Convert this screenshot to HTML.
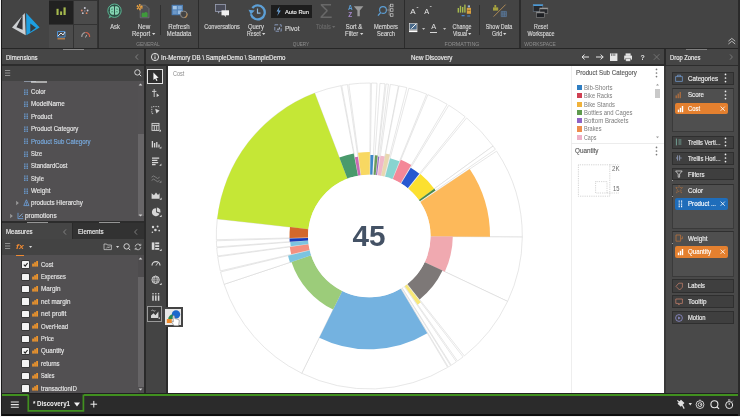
<!DOCTYPE html>
<html><head><meta charset="utf-8"><title>Discovery</title>
<style>
html,body{margin:0;padding:0;}
body{width:740px;height:417px;overflow:hidden;background:#444;position:relative;font-family:"Liberation Sans",sans-serif;}
#app{position:absolute;left:0;top:0;width:740px;height:417px;overflow:hidden;background:#444;}
.r{position:absolute;box-sizing:border-box;}
.t{position:absolute;white-space:nowrap;display:block;}
#txt{position:absolute;left:0;top:0;width:740px;height:417px;will-change:transform;}
svg{position:absolute;overflow:visible;}
</style></head><body><div id="app">
<div class="r" style="left:0px;top:0px;width:740px;height:48px;background:#444444;"></div>
<div class="r" style="left:0px;top:48px;width:740px;height:1px;background:#262626;"></div>
<div class="r" style="left:0px;top:49px;width:740px;height:15px;background:#464646;"></div>
<div class="r" style="left:0px;top:64px;width:740px;height:2px;background:#2d2d2d;"></div>
<div class="r" style="left:0px;top:66px;width:144px;height:15px;background:#434343;"></div>
<div class="r" style="left:0px;top:80.5px;width:144px;height:0.8px;background:#383838;"></div>
<div class="r" style="left:0px;top:81px;width:144px;height:140px;background:#525052;"></div>
<div class="r" style="left:137.5px;top:81px;width:6.5px;height:140px;background:#535153;"></div>
<div class="r" style="left:137.5px;top:134px;width:6.5px;height:82px;background:#686668;"></div>
<div class="r" style="left:0px;top:221px;width:144px;height:2px;background:#2c2c2c;"></div>
<div class="r" style="left:0px;top:223px;width:72.5px;height:16px;background:#454545;"></div>
<div class="r" style="left:72.5px;top:223px;width:71.5px;height:16px;background:#323232;"></div>
<div class="r" style="left:72px;top:223px;width:1px;height:16px;background:#2a2a2a;"></div>
<div class="r" style="left:0px;top:239px;width:144px;height:15.5px;background:#434343;"></div>
<div class="r" style="left:0px;top:254.5px;width:144px;height:139px;background:#525052;"></div>
<div class="r" style="left:137.5px;top:254.5px;width:6.5px;height:139px;background:#4e4c4e;"></div>
<div class="r" style="left:137.5px;top:277.4px;width:6.5px;height:109.6px;background:#666466;"></div>
<div class="r" style="left:144px;top:49px;width:2px;height:345px;background:#2a2a2a;"></div>
<div class="r" style="left:146px;top:66px;width:20px;height:328px;background:#444444;"></div>
<div class="r" style="left:166px;top:66px;width:2px;height:328px;background:#2c2c2c;"></div>
<div class="r" style="left:168px;top:66px;width:496px;height:327px;background:#ffffff;"></div>
<div class="r" style="left:664px;top:49px;width:1.5px;height:17px;background:#2a2a2a;"></div>
<div class="r" style="left:664px;top:66px;width:2px;height:328px;background:#393939;"></div>
<div class="r" style="left:665.5px;top:49px;width:74.5px;height:16px;background:#454545;"></div>
<div class="r" style="left:666px;top:66px;width:74px;height:328px;background:#494949;"></div>
<div class="r" style="left:0px;top:393px;width:740px;height:1px;background:#222;"></div>
<div class="r" style="left:0px;top:396px;width:740px;height:18px;background:#2b2b2b;"></div>
<div class="r" style="left:0px;top:394px;width:740px;height:2px;background:#41901f;"></div>
<div class="r" style="left:0px;top:413.8px;width:740px;height:1.8px;background:#0c0c0c;"></div>
<div class="r" style="left:0px;top:415.5px;width:740px;height:1.5px;background:#f2f2f2;"></div>
<div class="r" style="left:0px;top:0px;width:1px;height:417px;background:#f2f2f2;"></div>
<div class="r" style="left:1px;top:0px;width:1.2px;height:415.5px;background:#1a1a1a;"></div>
<div class="r" style="left:738.3px;top:0px;width:1.7px;height:415.5px;background:#2a2a2a;"></div>
<svg width="740" height="417" viewBox="0 0 740 417" style="left:0;top:0"><path d="M308.38,229.17L217.25,218.95A153,153 0 0 1 314.72,93.07L347.43,178.73A61.3,61.3 0 0 0 308.38,229.17Z" fill="#fff" stroke="#d6d6d6" stroke-width="0.6"/><path d="M347.43,178.73L314.72,93.07A153,153 0 0 1 340.89,85.66L357.92,175.77A61.3,61.3 0 0 0 347.43,178.73Z" fill="#fff" stroke="#d6d6d6" stroke-width="0.6"/><path d="M358.23,175.71L341.68,85.51A153,153 0 0 1 347.48,84.56L360.56,175.33A61.3,61.3 0 0 0 358.23,175.71Z" fill="#fff" stroke="#d6d6d6" stroke-width="0.6"/><path d="M361.09,175.25L348.80,84.38A153,153 0 0 1 370.37,83.00L369.73,174.70A61.3,61.3 0 0 0 361.09,175.25Z" fill="#fff" stroke="#d6d6d6" stroke-width="0.6"/><path d="M370.16,174.71L371.44,83.01A153,153 0 0 1 377.04,83.20L372.40,174.78A61.3,61.3 0 0 0 370.16,174.71Z" fill="#fff" stroke="#d6d6d6" stroke-width="0.6"/><path d="M373.58,174.85L379.97,83.37A153,153 0 0 1 385.03,83.81L375.60,175.02A61.3,61.3 0 0 0 373.58,174.85Z" fill="#fff" stroke="#d6d6d6" stroke-width="0.6"/><path d="M376.03,175.07L386.09,83.92A153,153 0 0 1 388.48,84.21L376.98,175.18A61.3,61.3 0 0 0 376.03,175.07Z" fill="#fff" stroke="#d6d6d6" stroke-width="0.6"/><path d="M377.73,175.28L390.33,84.45A153,153 0 0 1 398.49,85.81L381.00,175.83A61.3,61.3 0 0 0 377.73,175.28Z" fill="#fff" stroke="#d6d6d6" stroke-width="0.6"/><path d="M381.21,175.87L399.02,85.91A153,153 0 0 1 406.83,87.67L384.34,176.57A61.3,61.3 0 0 0 381.21,175.87Z" fill="#fff" stroke="#d6d6d6" stroke-width="0.6"/><path d="M385.17,176.79L408.90,88.21A153,153 0 0 1 426.61,94.14L392.26,179.16A61.3,61.3 0 0 0 385.17,176.79Z" fill="#fff" stroke="#d6d6d6" stroke-width="0.6"/><path d="M392.76,179.37L427.85,94.65A153,153 0 0 1 447.18,104.31L400.50,183.24A61.3,61.3 0 0 0 392.76,179.37Z" fill="#fff" stroke="#d6d6d6" stroke-width="0.6"/><path d="M401.15,183.62L448.79,105.27A153,153 0 0 1 465.17,116.76L407.71,188.23A61.3,61.3 0 0 0 401.15,183.62Z" fill="#fff" stroke="#d6d6d6" stroke-width="0.6"/><path d="M408.29,188.70L466.62,117.94A153,153 0 0 1 493.08,146.07L418.89,199.97A61.3,61.3 0 0 0 408.29,188.70Z" fill="#fff" stroke="#d6d6d6" stroke-width="0.6"/><path d="M418.89,199.97L493.08,146.07A153,153 0 0 1 495.39,149.34L419.82,201.28A61.3,61.3 0 0 0 418.89,199.97Z" fill="#fff" stroke="#d6d6d6" stroke-width="0.6"/><path d="M420.30,201.99L496.59,151.11A153,153 0 0 1 522.30,237.07L430.60,236.43A61.3,61.3 0 0 0 420.30,201.99Z" fill="#fff" stroke="#d6d6d6" stroke-width="0.6"/><path d="M430.60,236.43L522.30,237.07A153,153 0 0 1 507.62,301.39L424.72,262.20A61.3,61.3 0 0 0 430.60,236.43Z" fill="#fff" stroke="#d6d6d6" stroke-width="0.6"/><path d="M424.72,262.20L507.62,301.39A153,153 0 0 1 464.34,355.91L407.38,284.04A61.3,61.3 0 0 0 424.72,262.20Z" fill="#fff" stroke="#d6d6d6" stroke-width="0.6"/><path d="M406.87,284.44L463.07,356.89A153,153 0 0 1 457.49,361.02L404.64,286.09A61.3,61.3 0 0 0 406.87,284.44Z" fill="#fff" stroke="#d6d6d6" stroke-width="0.6"/><path d="M404.20,286.40L456.40,361.79A153,153 0 0 1 451.28,365.18L402.15,287.76A61.3,61.3 0 0 0 404.20,286.40Z" fill="#fff" stroke="#d6d6d6" stroke-width="0.6"/><path d="M401.87,287.93L450.60,365.61A153,153 0 0 1 448.33,367.01L400.96,288.49A61.3,61.3 0 0 0 401.87,287.93Z" fill="#fff" stroke="#d6d6d6" stroke-width="0.6"/><path d="M400.69,288.65L447.64,367.42A153,153 0 0 1 301.75,373.28L342.24,291.00A61.3,61.3 0 0 0 400.69,288.65Z" fill="#fff" stroke="#d6d6d6" stroke-width="0.6"/><path d="M342.24,291.00L301.75,373.28A153,153 0 0 1 224.12,284.29L311.13,255.35A61.3,61.3 0 0 0 342.24,291.00Z" fill="#fff" stroke="#d6d6d6" stroke-width="0.6"/><path d="M311.13,255.35L224.12,284.29A153,153 0 0 1 220.59,271.98L309.72,250.41A61.3,61.3 0 0 0 311.13,255.35Z" fill="#fff" stroke="#d6d6d6" stroke-width="0.6"/><path d="M309.62,250.00L220.34,270.94A153,153 0 0 1 217.72,256.76L308.57,244.32A61.3,61.3 0 0 0 309.62,250.00Z" fill="#fff" stroke="#d6d6d6" stroke-width="0.6"/><path d="M308.52,244.00L217.61,255.97A153,153 0 0 1 216.75,247.74L308.18,240.70A61.3,61.3 0 0 0 308.52,244.00Z" fill="#fff" stroke="#d6d6d6" stroke-width="0.6"/><path d="M308.16,240.38L216.69,246.94A153,153 0 0 1 216.38,240.81L308.03,237.93A61.3,61.3 0 0 0 308.16,240.38Z" fill="#fff" stroke="#d6d6d6" stroke-width="0.6"/><path d="M308.02,237.50L216.35,239.74A153,153 0 0 1 217.25,218.95L308.38,229.17A61.3,61.3 0 0 0 308.02,237.50Z" fill="#fff" stroke="#d6d6d6" stroke-width="0.6"/><path d="M308.38,229.17L217.25,218.95A153,153 0 0 1 314.72,93.07L347.43,178.73A61.3,61.3 0 0 0 308.38,229.17Z" fill="#c5e736"/><path d="M347.43,178.73L339.33,157.53A84,84 0 0 1 353.70,153.46L357.92,175.77A61.3,61.3 0 0 0 347.43,178.73Z" fill="#4a9a6c"/><path d="M358.23,175.71L354.86,157.31A80,80 0 0 1 357.89,156.82L360.56,175.33A61.3,61.3 0 0 0 358.23,175.71Z" fill="#c86ab4"/><path d="M361.09,175.25L358.05,152.76A84,84 0 0 1 369.89,152.00L369.73,174.70A61.3,61.3 0 0 0 361.09,175.25Z" fill="#f8d862"/><path d="M370.16,174.71L370.43,155.01A81,81 0 0 1 373.40,155.10L372.40,174.78A61.3,61.3 0 0 0 370.16,174.71Z" fill="#3c88c8"/><path d="M373.58,174.85L374.95,155.20A81,81 0 0 1 377.63,155.43L375.60,175.02A61.3,61.3 0 0 0 373.58,174.85Z" fill="#6a9a5a"/><path d="M376.03,175.07L378.08,156.48A80,80 0 0 1 379.33,156.63L376.98,175.18A61.3,61.3 0 0 0 376.03,175.07Z" fill="#9a6ac0"/><path d="M377.73,175.28L380.43,155.77A81,81 0 0 1 384.76,156.49L381.00,175.83A61.3,61.3 0 0 0 377.73,175.28Z" fill="#f0b8c8"/><path d="M381.21,175.87L385.62,153.60A84,84 0 0 1 389.91,154.57L384.34,176.57A61.3,61.3 0 0 0 381.21,175.87Z" fill="#e8d8b0"/><path d="M385.17,176.79L390.13,158.24A80.5,80.5 0 0 1 399.46,161.36L392.26,179.16A61.3,61.3 0 0 0 385.17,176.79Z" fill="#88d4d0"/><path d="M392.76,179.37L400.87,159.78A82.5,82.5 0 0 1 411.30,164.99L400.50,183.24A61.3,61.3 0 0 0 392.76,179.37Z" fill="#f48898"/><path d="M401.15,183.62L410.76,167.81A79.8,79.8 0 0 1 419.30,173.81L407.71,188.23A61.3,61.3 0 0 0 401.15,183.62Z" fill="#2858d0"/><path d="M408.29,188.70L420.38,174.04A80.3,80.3 0 0 1 434.26,188.80L418.89,199.97A61.3,61.3 0 0 0 408.29,188.70Z" fill="#fce030"/><path d="M418.89,199.97L434.26,188.80A80.3,80.3 0 0 1 435.48,190.52L419.82,201.28A61.3,61.3 0 0 0 418.89,199.97Z" fill="#4a8a4a"/><path d="M420.30,201.99L469.72,169.03A120.7,120.7 0 0 1 490.00,236.84L430.60,236.43A61.3,61.3 0 0 0 420.30,201.99Z" fill="#fdb95a"/><path d="M430.60,236.43L452.80,236.58A83.5,83.5 0 0 1 444.79,271.68L424.72,262.20A61.3,61.3 0 0 0 430.60,236.43Z" fill="#f0a9b0"/><path d="M424.72,262.20L442.53,270.62A81,81 0 0 1 419.61,299.48L407.38,284.04A61.3,61.3 0 0 0 424.72,262.20Z" fill="#7d7877"/><path d="M406.87,284.44L420.78,302.37A84,84 0 0 1 417.72,304.64L404.64,286.09A61.3,61.3 0 0 0 406.87,284.44Z" fill="#f8e878"/><path d="M400.69,288.65L427.31,333.32A113.3,113.3 0 0 1 319.28,337.66L342.24,291.00A61.3,61.3 0 0 0 400.69,288.65Z" fill="#74b2e0"/><path d="M342.24,291.00L333.10,309.58A82,82 0 0 1 291.49,261.88L311.13,255.35A61.3,61.3 0 0 0 342.24,291.00Z" fill="#9ccc7a"/><path d="M311.13,255.35L289.97,262.39A83.6,83.6 0 0 1 288.04,255.66L309.72,250.41A61.3,61.3 0 0 0 311.13,255.35Z" fill="#7cc4e0"/><path d="M309.62,250.00L291.22,254.31A80.2,80.2 0 0 1 289.84,246.88L308.57,244.32A61.3,61.3 0 0 0 309.62,250.00Z" fill="#f49080"/><path d="M308.52,244.00L290.68,246.35A79.3,79.3 0 0 1 290.23,242.08L308.18,240.70A61.3,61.3 0 0 0 308.52,244.00Z" fill="#7cc4e0"/><path d="M308.16,240.38L289.70,241.71A79.8,79.8 0 0 1 289.54,238.51L308.03,237.93A61.3,61.3 0 0 0 308.16,240.38Z" fill="#1a3ab8"/><path d="M308.02,237.50L289.52,237.95A79.8,79.8 0 0 1 290.00,227.10L308.38,229.17A61.3,61.3 0 0 0 308.02,237.50Z" fill="#d4682c"/><circle cx="369.3" cy="236.0" r="61.3" fill="#fff"/></svg>
<div class="r" style="left:48.5px;top:0px;width:49.5px;height:48px;background:#333333;"></div>
<div class="r" style="left:48.7px;top:1px;width:24.8px;height:23.3px;background:#212121;"></div>
<div class="r" style="left:74.3px;top:1px;width:22.9px;height:23.3px;background:#4b4b4b;"></div>
<div class="r" style="left:48.7px;top:25px;width:24.8px;height:22.6px;background:#4b4b4b;"></div>
<div class="r" style="left:74.3px;top:25px;width:22.9px;height:22.6px;background:#4b4b4b;"></div>
<div class="r" style="left:97.6px;top:0px;width:1.2px;height:48px;background:#2e2e2e;"></div>
<svg style="left:0px;top:0px" width="48" height="48" viewBox="0 0 48 48">
<path d="M16.4,27.2 L22.6,14.9 L22.6,29.8 Z" fill="#343438"/><path d="M30.3,23.4 L36,27.8 L30.3,32 Z" fill="#343a40"/>
<path d="M12,27.6 L24.8,12.9 L25.7,35.2 Z M16.4,27.2 L22.6,14.9 L22.6,29.8 Z" fill="#cdd0d3" fill-rule="evenodd"/>
<path d="M26.2,12.9 L39.6,27.6 L26.4,35.2 Z M30.3,23.4 L36,27.8 L30.3,32 Z" fill="#1d9fe2" fill-rule="evenodd"/>
</svg>
<svg style="left:48px;top:0px" width="50" height="48" viewBox="0 0 50 48">
<rect x="8.5" y="8.8" width="2.1" height="6.2" fill="#a6ba4e"/>
<rect x="12.1" y="11.4" width="2" height="3.6" fill="#a6ba4e"/>
<rect x="15.5" y="7.4" width="2.2" height="7.6" fill="#a6ba4e"/>
<circle cx="36.8" cy="8" r="1" fill="#c9c9d6"/><circle cx="33.8" cy="10.5" r="0.9" fill="#d9826a"/><circle cx="39.6" cy="10.5" r="0.9" fill="#c9c9d6"/>
<circle cx="34.8" cy="13.2" r="0.9" fill="#c9c9d6"/><circle cx="38.6" cy="13.2" r="0.9" fill="#e0805a"/><circle cx="36.8" cy="11" r="0.7" fill="#8a8aa0"/>
<path d="M9.5,31.5h7.5v5.5h-7.5z" fill="none" stroke="#4f8fd0" stroke-width="1"/><path d="M10,36 l3,-3 l2,2 l2,-3" stroke="#dfe6f0" stroke-width="1" fill="none"/>
<rect x="9.5" y="38.2" width="7.5" height="1.2" fill="#d08a4a"/>
<path d="M33.8,37 a4,4 0 0 1 3.5,-4.5" fill="none" stroke="#a0a0a0" stroke-width="1.2"/><path d="M37.3,32.5 a4,4 0 0 1 4.3,4.5" fill="none" stroke="#d0604a" stroke-width="1.2"/>
<path d="M37.5,37.5 l1.2,-2.6" stroke="#bdbdbd" stroke-width="0.9"/>
</svg>
<div class="r" style="left:62.5px;top:49px;width:21px;height:1px;background:#9a9a9a;opacity:.8;"></div>
<div class="r" style="left:685.5px;top:49px;width:21px;height:1px;background:#9a9a9a;opacity:.7;"></div>
<div class="r" style="left:197.5px;top:0px;width:1.3px;height:48px;background:#2c2c2c;"></div>
<div class="r" style="left:403.5px;top:0px;width:1.3px;height:48px;background:#2c2c2c;"></div>
<div class="r" style="left:519.3px;top:0px;width:1.3px;height:48px;background:#2c2c2c;"></div>
<div class="r" style="left:160.3px;top:5px;width:0.8px;height:30px;background:#303030;"></div>
<div class="r" style="left:479.3px;top:5px;width:0.8px;height:30px;background:#303030;"></div>
<svg style="left:106px;top:2px" width="18" height="18" viewBox="0 0 18 18"><circle cx="8.5" cy="8.7" r="6.7" fill="#2d4f45" stroke="#5cb493" stroke-width="1"/>
<path d="M3.6,13.4 l-1.2,3.2 l3.4,-1.8" fill="#5cb493"/>
<path d="M8,4.4 C4.4,3.8 3.4,6.6 4.2,8.2 C3,10.2 4.6,13 8,12.8 Z" fill="#86d6b4"/><path d="M9,4.4 C12.6,3.8 13.6,6.6 12.8,8.2 C14,10.2 12.4,13 9,12.8 Z" fill="#86d6b4"/>
<path d="M5,7.2 q1.4,0.4 2,-0.6 M5.2,10 q1.2,-0.8 2,0.2 M12,7.2 q-1.4,0.4 -2,-0.6 M11.8,10 q-1.2,-0.8 -2,0.2" stroke="#2f6a55" stroke-width="0.7" fill="none"/></svg>
<svg style="left:134px;top:2px" width="18" height="18" viewBox="0 0 18 18"><path d="M6.2,3.2h5.4l3.4,3.4v9.2h-8.8z" fill="#4e5054" stroke="#74777c" stroke-width="0.7"/>
<path d="M7.6,15 v-3.2 q1.2,-2 2.4,-0.6 q1.6,-2.4 3.6,-0.2 v4z" fill="#3f9a3c"/>
<circle cx="5.6" cy="5.2" r="2.2" fill="none" stroke="#e8a040" stroke-width="1.8" stroke-dasharray="1.3 0.9"/><circle cx="5.6" cy="5.2" r="1.5" fill="#e8a040"/><circle cx="5.6" cy="5.2" r="0.7" fill="#5a4a30"/></svg>
<svg style="left:151.60px;top:33.45px" width="3.4" height="2.11" viewBox="0 0 3.4 2.11"><path d="M0,0H3.4L1.7,2.11Z" fill="#d8d8d8"/></svg>
<svg style="left:169px;top:2px" width="20" height="18" viewBox="0 0 20 18"><rect x="2.6" y="2.8" width="11.4" height="10.4" fill="#4f7fb4"/><rect x="3.8" y="4" width="4" height="3.4" fill="#a4c4e4"/><rect x="8.8" y="4" width="4" height="3.4" fill="#7ea8d4"/>
<rect x="3.8" y="8.4" width="4" height="3.6" fill="#6c98c8"/><rect x="8.8" y="8.4" width="4" height="3.6" fill="#98bce0"/>
<circle cx="14.8" cy="12.4" r="3.3" fill="#444" stroke="#8a8a8a" stroke-width="1"/><path d="M17.9,11.4 a3.3,3.3 0 0 1 -2.2,4.2" fill="none" stroke="#b88a50" stroke-width="1.1"/><path d="M11.6,10.6 l2,-0.4 l-0.6,2z" fill="#444"/></svg>
<svg style="left:212px;top:2px" width="20" height="16" viewBox="0 0 20 16"><rect x="3.5" y="2.5" width="10" height="7" fill="#4a4c58" stroke="#9aa0b4" stroke-width="0.8"/><path d="M6,9.5v2.2l2.2,-2.2" fill="#9aa0b4"/>
<rect x="9.5" y="8.3" width="7.5" height="5" fill="#f0f0f0"/><path d="M14,13.2v1.8l-2,-1.8" fill="#f0f0f0"/></svg>
<svg style="left:245.8px;top:1.2px" width="23" height="23" viewBox="0 0 20 20"><path d="M4.3,11.5 a6.1,6.1 0 1 0 1.2,-5.5" fill="none" stroke="#5c9fd6" stroke-width="2"/><path d="M2.2,7.6 l5.4,0.6 l-3.4,3.6 z" fill="#5c9fd6"/>
<path d="M10,6.5v4h2.6" fill="none" stroke="#8ab6dc" stroke-width="1"/></svg>
<svg style="left:262.15px;top:33.45px" width="3.4" height="2.11" viewBox="0 0 3.4 2.11"><path d="M0,0H3.4L1.7,2.11Z" fill="#d8d8d8"/></svg>
<div class="r" style="left:271.3px;top:4.8px;width:40.7px;height:13.4px;background:#1d1d1d;"></div>
<svg style="left:275px;top:6px" width="7" height="11" viewBox="0 0 7 11"><path d="M4.6,0.6 L1.6,5.4 H3.6 L2.2,10 L5.8,4.4 H3.6 Z" fill="#6fa8e0"/></svg>
<svg style="left:273px;top:23px" width="10" height="10" viewBox="0 0 10 10"><path d="M1.8,1.8h6.4v6.4h-6.4z" fill="none" stroke="#8fa3c8" stroke-width="0.9" stroke-dasharray="3.4 1.6"/><path d="M4,6.2h2.4v-2" fill="none" stroke="#c8d4ea" stroke-width="0.8"/></svg>
<svg style="left:331.85px;top:26.25px" width="3.4" height="2.11" viewBox="0 0 3.4 2.11"><path d="M0,0H3.4L1.7,2.11Z" fill="#6a6a6a"/></svg>
<svg style="left:353px;top:4px" width="12" height="14" viewBox="0 0 12 14"><path d="M0.8,2.2h9.6l-3.6,4.4v5.6h-2.4v-5.6z" fill="#9a9a9a"/></svg>
<svg style="left:359.90px;top:33.45px" width="3.4" height="2.11" viewBox="0 0 3.4 2.11"><path d="M0,0H3.4L1.7,2.11Z" fill="#d8d8d8"/></svg>
<svg style="left:376px;top:2px" width="20" height="18" viewBox="0 0 20 18"><circle cx="7" cy="8" r="3.4" fill="none" stroke="#5c9fd6" stroke-width="1.1"/><path d="M4.6,10.6 l-2.6,3" stroke="#5c9fd6" stroke-width="1.3"/>
<path d="M10,8h3.2M13.2,3.5v9.6M13.2,3.5h1.4M13.2,8h1.4M13.2,13.1h1.4" stroke="#9a9a9a" stroke-width="0.7" fill="none"/>
<rect x="14.4" y="2.2" width="2.6" height="2.6" fill="none" stroke="#c8c8c8" stroke-width="0.7"/><rect x="14.4" y="6.7" width="2.6" height="2.6" fill="none" stroke="#c8c8c8" stroke-width="0.7"/><rect x="14.4" y="11.7" width="2.6" height="2.6" fill="none" stroke="#c8c8c8" stroke-width="0.7"/></svg>
<svg style="left:408px;top:22px" width="12" height="12" viewBox="0 0 12 12"><rect x="1.4" y="1.6" width="7.6" height="6.2" fill="#4a6a8a" stroke="#d8d8d8" stroke-width="0.7"/><path d="M3.4,6.6 l4.6,-4.6" stroke="#f0f0f0" stroke-width="1"/><rect x="1" y="8.4" width="8.4" height="1.7" fill="#fff"/></svg>
<svg style="left:421.70px;top:27.91px" width="3.2" height="1.98" viewBox="0 0 3.2 1.98"><path d="M0,0H3.2L1.6,1.98Z" fill="#bdbdbd"/></svg>
<div class="r" style="left:430.2px;top:31.5px;width:7.2px;height:0.9px;background:#d8d8d8;"></div>
<svg style="left:442.80px;top:27.91px" width="3.2" height="1.98" viewBox="0 0 3.2 1.98"><path d="M0,0H3.2L1.6,1.98Z" fill="#bdbdbd"/></svg>
<svg style="left:453px;top:2px" width="20" height="18" viewBox="0 0 20 18"><rect x="4.6" y="6" width="1.4" height="4.6" fill="#a6ba4e"/><rect x="6.8" y="3.8" width="1.4" height="6.8" fill="#a6ba4e"/><rect x="9" y="5" width="1.4" height="5.6" fill="#a6ba4e"/><rect x="11.2" y="2.6" width="1.4" height="8" fill="#a6ba4e"/>
<rect x="13.8" y="5.8" width="4.2" height="6" fill="#d8a040"/><rect x="14.8" y="3.4" width="2.2" height="2" fill="#9ab4d8"/><path d="M14.4,8.4h3" stroke="#7a5a20" stroke-width="0.7"/>
<path d="M8.6,13.6h3M14.2,14h3" stroke="#4a88d0" stroke-width="1.2"/></svg>
<svg style="left:468.40px;top:33.45px" width="3.4" height="2.11" viewBox="0 0 3.4 2.11"><path d="M0,0H3.4L1.7,2.11Z" fill="#d8d8d8"/></svg>
<svg style="left:490px;top:2px" width="20" height="18" viewBox="0 0 20 18"><path d="M3.6,14.6 L15.6,2.6" stroke="#c89a5a" stroke-width="0.8"/>
<rect x="3" y="5.4" width="5.2" height="3.2" fill="#a6a23e"/><rect x="4.4" y="3" width="1.8" height="2.6" fill="#a6a23e"/>
<path d="M11.2,9.4h5.2v5.2h-5.2zM11.2,11.1h5.2M11.2,12.9h5.2M12.9,9.4v5.2M14.7,9.4v5.2" fill="none" stroke="#5c7fa8" stroke-width="0.7"/></svg>
<svg style="left:503.40px;top:33.45px" width="3.4" height="2.11" viewBox="0 0 3.4 2.11"><path d="M0,0H3.4L1.7,2.11Z" fill="#d8d8d8"/></svg>
<svg style="left:531px;top:2px" width="20" height="18" viewBox="0 0 20 18"><rect x="2.2" y="2.6" width="9.6" height="6.8" fill="#26282c" stroke="#6a7a8a" stroke-width="0.6"/><rect x="2.2" y="2.4" width="9.6" height="1.6" fill="#4a9ad8"/>
<rect x="8.8" y="6" width="8" height="5.6" fill="#26282c" stroke="#8a8a8a" stroke-width="0.6"/><rect x="8.8" y="6" width="8" height="1.2" fill="#9a9a9a"/>
<rect x="5.4" y="10" width="8" height="5.6" fill="#1e2024" stroke="#8a8a8a" stroke-width="0.6"/><rect x="5.4" y="10" width="8" height="1.2" fill="#8a8a8a"/></svg>
<svg style="left:727px;top:37px" width="10" height="8" viewBox="0 0 10 8"><path d="M1.4,4.2 L4.8,1.4 L8.2,4.2 M1.4,7 L4.8,4.2 L8.2,7" fill="none" stroke="#c4c4c4" stroke-width="0.9"/></svg>
<svg style="left:131.5px;top:52.3px" width="10" height="10" viewBox="0 0 10 10"><path d="M6,2.4 L3.6,5 L6,7.6" fill="none" stroke="#8e8e8e" stroke-width="0.8"/></svg>
<svg style="left:150.2px;top:52.3px" width="10" height="10" viewBox="0 0 10 10"><circle cx="5" cy="5" r="3.6" fill="none" stroke="#f0f0f0" stroke-width="0.9"/><path d="M5,4.4v2.8" stroke="#f0f0f0" stroke-width="1"/><circle cx="5" cy="3" r="0.6" fill="#f0f0f0"/></svg>
<svg style="left:578px;top:51px" width="88" height="12" viewBox="0 0 88 12"><path d="M4,6h7M4,6l2.6,-2.4M4,6l2.6,2.4" stroke="#e6e6e6" stroke-width="1" fill="none"/>
<path d="M18,6h7.2M25.2,6l-2.6,-2.4M25.2,6l-2.6,2.4" stroke="#e6e6e6" stroke-width="1" fill="none"/>
<path d="M32,2.4h7.4v7.6h-7.4z" fill="#e6e6e6"/><path d="M33.6,2.4v2.6M35.2,2.4v2.6M36.8,2.4v2.6" stroke="#555" stroke-width="0.7"/>
<rect x="46.2" y="4.6" width="7.8" height="4" fill="#e6e6e6"/><rect x="47.6" y="2.4" width="5" height="2.4" fill="#e6e6e6"/><rect x="47.8" y="7.2" width="4.6" height="3" fill="#e6e6e6" stroke="#555" stroke-width="0.5"/>
<path d="M75.8,3.2 L81.4,8.8 M81.4,3.2 L75.8,8.8" stroke="#777" stroke-width="0.9"/></svg>
<svg style="left:726px;top:52.3px" width="10" height="10" viewBox="0 0 10 10"><path d="M4,2.4 L6.4,5 L4,7.6" fill="none" stroke="#858585" stroke-width="0.8"/></svg>
<svg style="left:4px;top:69px" width="10" height="8" viewBox="0 0 10 8"><path d="M1,1.5h5.2M1,4h5.2M1,6.5h5.2" stroke="#a4a4a4" stroke-width="0.8"/></svg>
<svg style="left:133px;top:68px" width="10" height="10" viewBox="0 0 10 10"><circle cx="4.4" cy="4.4" r="2.7" fill="none" stroke="#e0e0e0" stroke-width="0.9"/><path d="M6.4,6.4l1.8,1.8" stroke="#e0e0e0" stroke-width="1"/></svg>
<svg style="left:137px;top:82px" width="7" height="5" viewBox="0 0 7 5"><path d="M1.6,3.6 L3.5,1.4 L5.4,3.6z" fill="#d0d0d0"/></svg>
<svg style="left:137px;top:213px" width="7" height="5" viewBox="0 0 7 5"><path d="M1.6,1.4 L3.5,3.6 L5.4,1.4z" fill="#d0d0d0"/></svg>
<div class="r" style="left:24px;top:81.2px;width:12px;height:1.2px;background:#b8c8e0;opacity:.55;"></div>
<div class="r" style="left:31px;top:81.2px;width:16px;height:1.4px;background:#e8e8e8;opacity:.6;"></div>
<svg style="left:23.8px;top:88.5px" width="5" height="7" viewBox="0 0 5 7"><path d="M0.8,0.4v5.6M3.2,0.4v5.6" stroke="#6c9fd6" stroke-width="1.3" stroke-dasharray="1.4 0.7"/></svg>
<svg style="left:23.8px;top:100.89999999999999px" width="5" height="7" viewBox="0 0 5 7"><path d="M0.8,0.4v5.6M3.2,0.4v5.6" stroke="#6c9fd6" stroke-width="1.3" stroke-dasharray="1.4 0.7"/></svg>
<svg style="left:23.8px;top:113.39999999999999px" width="5" height="7" viewBox="0 0 5 7"><path d="M0.8,0.4v5.6M3.2,0.4v5.6" stroke="#6c9fd6" stroke-width="1.3" stroke-dasharray="1.4 0.7"/></svg>
<svg style="left:23.8px;top:125.8px" width="5" height="7" viewBox="0 0 5 7"><path d="M0.8,0.4v5.6M3.2,0.4v5.6" stroke="#6c9fd6" stroke-width="1.3" stroke-dasharray="1.4 0.7"/></svg>
<svg style="left:23.8px;top:138.20000000000002px" width="5" height="7" viewBox="0 0 5 7"><path d="M0.8,0.4v5.6M3.2,0.4v5.6" stroke="#6c9fd6" stroke-width="1.3" stroke-dasharray="1.4 0.7"/></svg>
<svg style="left:23.8px;top:150.5px" width="5" height="7" viewBox="0 0 5 7"><path d="M0.8,0.4v5.6M3.2,0.4v5.6" stroke="#6c9fd6" stroke-width="1.3" stroke-dasharray="1.4 0.7"/></svg>
<svg style="left:23.8px;top:162.9px" width="5" height="7" viewBox="0 0 5 7"><path d="M0.8,0.4v5.6M3.2,0.4v5.6" stroke="#6c9fd6" stroke-width="1.3" stroke-dasharray="1.4 0.7"/></svg>
<svg style="left:23.8px;top:175.3px" width="5" height="7" viewBox="0 0 5 7"><path d="M0.8,0.4v5.6M3.2,0.4v5.6" stroke="#6c9fd6" stroke-width="1.3" stroke-dasharray="1.4 0.7"/></svg>
<svg style="left:23.8px;top:187.60000000000002px" width="5" height="7" viewBox="0 0 5 7"><path d="M0.8,0.4v5.6M3.2,0.4v5.6" stroke="#6c9fd6" stroke-width="1.3" stroke-dasharray="1.4 0.7"/></svg>
<svg style="left:15px;top:200px" width="5" height="6" viewBox="0 0 5 6"><path d="M1.2,0.8 L3.8,3 L1.2,5.2z" fill="#9a9a9a"/></svg>
<svg style="left:23px;top:199px" width="7" height="8" viewBox="0 0 7 8"><path d="M3.4,0.8 L0.8,6.6h5.2z" fill="none" stroke="#6fa3e0" stroke-width="0.8"/><path d="M3.4,3v3.4" stroke="#6fa3e0" stroke-width="0.7"/></svg>
<svg style="left:9px;top:212.5px" width="5" height="6" viewBox="0 0 5 6"><path d="M1.2,0.8 L3.8,3 L1.2,5.2z" fill="#9a9a9a"/></svg>
<svg style="left:16.5px;top:211.5px" width="7" height="8" viewBox="0 0 7 8"><path d="M1,0.8v6M1,6.6h5.2" stroke="#6fa3e0" stroke-width="0.8" fill="none"/><path d="M2.2,5 L5.6,1.6" stroke="#9cc0ea" stroke-width="0.8"/><circle cx="5.4" cy="4.6" r="0.6" fill="#6fa3e0"/></svg>
<div class="r" style="left:27px;top:221.6px;width:21px;height:0.9px;background:#b0b0b0;opacity:.8;"></div>
<div class="r" style="left:99px;top:221.6px;width:21px;height:0.9px;background:#b0b0b0;opacity:.8;"></div>
<svg style="left:60px;top:226.5px" width="10" height="10" viewBox="0 0 10 10"><path d="M6,2.4 L3.6,5 L6,7.6" fill="none" stroke="#8e8e8e" stroke-width="0.8"/></svg>
<svg style="left:131px;top:226.5px" width="10" height="10" viewBox="0 0 10 10"><path d="M6,2.4 L3.6,5 L6,7.6" fill="none" stroke="#8e8e8e" stroke-width="0.8"/></svg>
<svg style="left:3.8px;top:242.4px" width="10" height="8" viewBox="0 0 10 8"><path d="M1,1.5h5.2M1,4h5.2M1,6.5h5.2" stroke="#a4a4a4" stroke-width="0.8"/></svg>
<svg style="left:28.60px;top:246.31px" width="3.2" height="1.98" viewBox="0 0 3.2 1.98"><path d="M0,0H3.2L1.6,1.98Z" fill="#d8d8d8"/></svg>
<div class="r" style="left:15.8px;top:254.6px;width:8.4px;height:1.6px;background:#f08a32;"></div>
<svg style="left:103px;top:241.5px" width="10" height="9" viewBox="0 0 10 9"><path d="M1,2h2.6l0.8,1h4v4.6h-7.4z" fill="none" stroke="#d8d8d8" stroke-width="0.7"/><path d="M3.4,6.4l1.4,-1.6l1.2,1l1.2,-1.6" fill="none" stroke="#d8d8d8" stroke-width="0.6"/></svg>
<svg style="left:116.40px;top:246.31px" width="3.2" height="1.98" viewBox="0 0 3.2 1.98"><path d="M0,0H3.2L1.6,1.98Z" fill="#d8d8d8"/></svg>
<svg style="left:122px;top:241.5px" width="10" height="10" viewBox="0 0 10 10"><circle cx="4.6" cy="4.4" r="2.7" fill="none" stroke="#e0e0e0" stroke-width="0.9"/><path d="M6.6,6.4l1.6,1.7" stroke="#e0e0e0" stroke-width="1"/></svg>
<svg style="left:133px;top:241.5px" width="10" height="10" viewBox="0 0 10 10"><path d="M2.2,4.6 a2.9,2.9 0 0 1 5.2,-1.4 M7.8,5.2 a2.9,2.9 0 0 1 -5.2,1.4" fill="none" stroke="#d0d0d0" stroke-width="0.8"/><path d="M7.8,1.8v1.8h-1.8M2.2,8v-1.8h1.8" fill="none" stroke="#d0d0d0" stroke-width="0.7"/></svg>
<svg style="left:137px;top:256px" width="7" height="5" viewBox="0 0 7 5"><path d="M1.6,3.6 L3.5,1.4 L5.4,3.6z" fill="#d0d0d0"/></svg>
<svg style="left:137px;top:387px" width="7" height="5" viewBox="0 0 7 5"><path d="M1.6,1.4 L3.5,3.6 L5.4,1.4z" fill="#d0d0d0"/></svg>
<div class="r" style="left:22px;top:261.1px;width:6.6px;height:6.6px;background:#f4f4f4;box-shadow:0 0 0 0.7px #303030;border-radius:0.6px;"></div>
<svg style="left:21.6px;top:260.8px" width="7.2" height="7.2" viewBox="0 0 7.2 7.2"><path d="M1.8,3.7 L3.2,5.1 L5.6,2" fill="none" stroke="#222" stroke-width="1.1"/></svg>
<svg style="left:31.6px;top:261.3px" width="6.4" height="6" viewBox="0 0 6.4 6"><rect x="0.2" y="2.6" width="1.7" height="3" fill="#f0962c"/><rect x="2.2" y="1.2" width="1.7" height="4.4" fill="#f0962c"/><rect x="4.2" y="0" width="1.8" height="5.6" fill="#f0962c"/></svg>
<div class="r" style="left:22px;top:273.5px;width:6.6px;height:6.6px;background:#f4f4f4;box-shadow:0 0 0 0.7px #303030;border-radius:0.6px;"></div>
<svg style="left:31.6px;top:273.7px" width="6.4" height="6" viewBox="0 0 6.4 6"><rect x="0.2" y="2.6" width="1.7" height="3" fill="#f0962c"/><rect x="2.2" y="1.2" width="1.7" height="4.4" fill="#f0962c"/><rect x="4.2" y="0" width="1.8" height="5.6" fill="#f0962c"/></svg>
<div class="r" style="left:22px;top:285.90000000000003px;width:6.6px;height:6.6px;background:#f4f4f4;box-shadow:0 0 0 0.7px #303030;border-radius:0.6px;"></div>
<svg style="left:31.6px;top:286.1px" width="6.4" height="6" viewBox="0 0 6.4 6"><rect x="0.2" y="2.6" width="1.7" height="3" fill="#f0962c"/><rect x="2.2" y="1.2" width="1.7" height="4.4" fill="#f0962c"/><rect x="4.2" y="0" width="1.8" height="5.6" fill="#f0962c"/></svg>
<div class="r" style="left:22px;top:298.3px;width:6.6px;height:6.6px;background:#f4f4f4;box-shadow:0 0 0 0.7px #303030;border-radius:0.6px;"></div>
<svg style="left:31.6px;top:298.5px" width="6.4" height="6" viewBox="0 0 6.4 6"><rect x="0.2" y="2.6" width="1.7" height="3" fill="#f0962c"/><rect x="2.2" y="1.2" width="1.7" height="4.4" fill="#f0962c"/><rect x="4.2" y="0" width="1.8" height="5.6" fill="#f0962c"/></svg>
<div class="r" style="left:22px;top:310.70000000000005px;width:6.6px;height:6.6px;background:#f4f4f4;box-shadow:0 0 0 0.7px #303030;border-radius:0.6px;"></div>
<svg style="left:31.6px;top:310.90000000000003px" width="6.4" height="6" viewBox="0 0 6.4 6"><rect x="0.2" y="2.6" width="1.7" height="3" fill="#f0962c"/><rect x="2.2" y="1.2" width="1.7" height="4.4" fill="#f0962c"/><rect x="4.2" y="0" width="1.8" height="5.6" fill="#f0962c"/></svg>
<div class="r" style="left:22px;top:323.1px;width:6.6px;height:6.6px;background:#f4f4f4;box-shadow:0 0 0 0.7px #303030;border-radius:0.6px;"></div>
<svg style="left:31.6px;top:323.3px" width="6.4" height="6" viewBox="0 0 6.4 6"><rect x="0.2" y="2.6" width="1.7" height="3" fill="#f0962c"/><rect x="2.2" y="1.2" width="1.7" height="4.4" fill="#f0962c"/><rect x="4.2" y="0" width="1.8" height="5.6" fill="#f0962c"/></svg>
<div class="r" style="left:22px;top:335.5px;width:6.6px;height:6.6px;background:#f4f4f4;box-shadow:0 0 0 0.7px #303030;border-radius:0.6px;"></div>
<svg style="left:31.6px;top:335.7px" width="6.4" height="6" viewBox="0 0 6.4 6"><rect x="0.2" y="2.6" width="1.7" height="3" fill="#f0962c"/><rect x="2.2" y="1.2" width="1.7" height="4.4" fill="#f0962c"/><rect x="4.2" y="0" width="1.8" height="5.6" fill="#f0962c"/></svg>
<div class="r" style="left:22px;top:347.90000000000003px;width:6.6px;height:6.6px;background:#f4f4f4;box-shadow:0 0 0 0.7px #303030;border-radius:0.6px;"></div>
<svg style="left:21.6px;top:347.6px" width="7.2" height="7.2" viewBox="0 0 7.2 7.2"><path d="M1.8,3.7 L3.2,5.1 L5.6,2" fill="none" stroke="#222" stroke-width="1.1"/></svg>
<svg style="left:31.6px;top:348.1px" width="6.4" height="6" viewBox="0 0 6.4 6"><rect x="0.2" y="2.6" width="1.7" height="3" fill="#f0962c"/><rect x="2.2" y="1.2" width="1.7" height="4.4" fill="#f0962c"/><rect x="4.2" y="0" width="1.8" height="5.6" fill="#f0962c"/></svg>
<div class="r" style="left:22px;top:360.3px;width:6.6px;height:6.6px;background:#f4f4f4;box-shadow:0 0 0 0.7px #303030;border-radius:0.6px;"></div>
<svg style="left:31.6px;top:360.5px" width="6.4" height="6" viewBox="0 0 6.4 6"><rect x="0.2" y="2.6" width="1.7" height="3" fill="#f0962c"/><rect x="2.2" y="1.2" width="1.7" height="4.4" fill="#f0962c"/><rect x="4.2" y="0" width="1.8" height="5.6" fill="#f0962c"/></svg>
<div class="r" style="left:22px;top:372.70000000000005px;width:6.6px;height:6.6px;background:#f4f4f4;box-shadow:0 0 0 0.7px #303030;border-radius:0.6px;"></div>
<svg style="left:31.6px;top:372.90000000000003px" width="6.4" height="6" viewBox="0 0 6.4 6"><rect x="0.2" y="2.6" width="1.7" height="3" fill="#f0962c"/><rect x="2.2" y="1.2" width="1.7" height="4.4" fill="#f0962c"/><rect x="4.2" y="0" width="1.8" height="5.6" fill="#f0962c"/></svg>
<div class="r" style="left:22px;top:385.1px;width:6.6px;height:6.6px;background:#f4f4f4;box-shadow:0 0 0 0.7px #303030;border-radius:0.6px;"></div>
<svg style="left:31.6px;top:385.3px" width="6.4" height="6" viewBox="0 0 6.4 6"><rect x="0.2" y="2.6" width="1.7" height="3" fill="#f0962c"/><rect x="2.2" y="1.2" width="1.7" height="4.4" fill="#f0962c"/><rect x="4.2" y="0" width="1.8" height="5.6" fill="#f0962c"/></svg>
<div class="r" style="left:147.4px;top:69px;width:15.6px;height:14.6px;background:#303030;border:1px solid #e4e4e4;"></div>
<svg style="left:150px;top:71px" width="11" height="11" viewBox="0 0 11 11"><path d="M3.4,1.6 L3.4,9 L5.2,7.4 L6.4,10 L7.5,9.5 L6.3,7 L8.6,6.8 Z" fill="#f4f4f4"/></svg>
<svg style="left:148.5px;top:87.3px" width="14" height="12" viewBox="0 0 14 12"><path d="M5.2,2v8M3,4.4h4.4" stroke="#d6d6d6" stroke-width="0.9"/><path d="M7.6,6.2 L7.6,10 L10.2,8.4z" fill="#d6d6d6"/></svg>
<svg style="left:148.5px;top:104.3px" width="14" height="12" viewBox="0 0 14 12"><path d="M4.2,9.6h-1.4v-7h7.2v1.6" fill="none" stroke="#d6d6d6" stroke-width="0.8" stroke-dasharray="1.4 1"/><path d="M6.2,4.8 L10.6,6.6 L7.4,9.6z" fill="#d6d6d6"/></svg>
<svg style="left:148.5px;top:121.3px" width="14" height="12" viewBox="0 0 14 12"><rect x="3" y="2.4" width="7" height="7" fill="none" stroke="#d6d6d6" stroke-width="0.9"/><path d="M3,4.4h7M5.3,4.4v5M7.7,4.4v5" stroke="#d6d6d6" stroke-width="0.9"/><path d="M12,8.4v2.2h-2.2z" fill="#d6d6d6"/></svg>
<svg style="left:148.5px;top:138.3px" width="14" height="12" viewBox="0 0 14 12"><path d="M3.4,3v6.6M5.6,5v4.6M7.8,4v5.6M10,6.6v3" stroke="#d6d6d6" stroke-width="1.3"/><path d="M12.4,8.4v2.2h-2.2z" fill="#d6d6d6"/></svg>
<svg style="left:148.5px;top:155.3px" width="14" height="12" viewBox="0 0 14 12"><path d="M3,3.2h7.2M3,5.4h5.4M3,7.6h6.2M3,9.6h3.6" stroke="#d6d6d6" stroke-width="1.3"/><path d="M12.4,8.6v2.2h-2.2z" fill="#d6d6d6"/></svg>
<svg style="left:148.5px;top:172.3px" width="14" height="12" viewBox="0 0 14 12"><path d="M2.6,5.2 q2,-2.6 4,0 t4,0 M2.6,8.4 q2,-2.6 4,0 t4,0" fill="none" stroke="#8a8a8a" stroke-width="0.8"/><path d="M12.4,8.6v2.2h-2.2z" fill="#8a8a8a"/></svg>
<svg style="left:148.5px;top:189.3px" width="14" height="12" viewBox="0 0 14 12"><path d="M2.6,9.8v-5.6l2.4,2l2,-2.6l2,2.4l1.6,-1.8v5.6z" fill="#d6d6d6"/><path d="M12.6,8.6v2.2h-2.2z" fill="#d6d6d6"/></svg>
<svg style="left:148.5px;top:206.3px" width="14" height="12" viewBox="0 0 14 12"><path d="M7,6.2 L7,2.2 A4,4 0 1 0 10.6,7.8z" fill="#d6d6d6"/><path d="M7.8,5.4 V1.6 A4,4 0 0 1 11.3,6.8z" fill="#d6d6d6"/><path d="M12.6,8.8v2.2h-2.2z" fill="#d6d6d6"/></svg>
<svg style="left:148.5px;top:223.3px" width="14" height="12" viewBox="0 0 14 12"><circle cx="4" cy="4" r="1.2" fill="#d6d6d6"/><circle cx="8.6" cy="3.4" r="1" fill="#d6d6d6"/><circle cx="6.4" cy="7" r="1.3" fill="#d6d6d6"/><circle cx="10.2" cy="7.6" r="0.9" fill="#d6d6d6"/><circle cx="3.4" cy="9.2" r="0.8" fill="#d6d6d6"/></svg>
<svg style="left:148.5px;top:240.3px" width="14" height="12" viewBox="0 0 14 12"><rect x="2.8" y="2.4" width="2.6" height="7.4" fill="#d6d6d6"/><rect x="6.2" y="2.4" width="4" height="1.8" fill="#d6d6d6"/><rect x="6.2" y="5.2" width="4" height="1.8" fill="#d6d6d6"/><rect x="6.2" y="8" width="4" height="1.8" fill="#d6d6d6"/><path d="M12.6,8.8v2.2h-2.2z" fill="#d6d6d6"/></svg>
<svg style="left:148.5px;top:257.3px" width="14" height="12" viewBox="0 0 14 12"><path d="M3,8.6 a4,4 0 0 1 8,0" fill="none" stroke="#d6d6d6" stroke-width="1.2"/><path d="M7,8.6 l1.8,-2.8" stroke="#d6d6d6" stroke-width="0.9"/></svg>
<svg style="left:148.5px;top:274.3px" width="14" height="12" viewBox="0 0 14 12"><circle cx="6.6" cy="5.8" r="3.7" fill="none" stroke="#d6d6d6" stroke-width="0.9"/><ellipse cx="6.6" cy="5.8" rx="1.7" ry="3.7" fill="none" stroke="#d6d6d6" stroke-width="0.7"/><path d="M2.9,5.8h7.4M3.6,3.8h6M3.6,7.8h6" stroke="#d6d6d6" stroke-width="0.6"/><path d="M12.6,8.8v2.2h-2.2z" fill="#d6d6d6"/></svg>
<svg style="left:148.5px;top:291.3px" width="14" height="12" viewBox="0 0 14 12"><path d="M4,4.4v5.4M6.8,4.4v5.4M9.6,4.4v5.4" stroke="#d6d6d6" stroke-width="1.5"/><circle cx="4" cy="2.8" r="0.8" fill="#d6d6d6"/><circle cx="6.8" cy="2.8" r="0.8" fill="#d6d6d6"/><circle cx="9.6" cy="2.8" r="0.8" fill="#d6d6d6"/></svg>
<div class="r" style="left:147.4px;top:306.4px;width:14.8px;height:15.4px;background:#3a3a3a;border:1px solid #9a9a9a;"></div>
<svg style="left:149px;top:308px" width="12" height="12" viewBox="0 0 12 12"><path d="M2,10 L2,7.6 L4.6,5.2 L6.4,7.2 L9.4,3.4 L9.4,10z" fill="#d6d6d6"/><path d="M2.4,2.6 q1,-1 2,0 t2,0" stroke="#d6d6d6" stroke-width="0.7" fill="none"/><path d="M11,9v1.8h-1.8z" fill="#d6d6d6"/></svg>
<div class="r" style="left:162.6px;top:306.6px;width:20.8px;height:20.8px;background:#e8e8e8;border:2px solid #444;"></div>
<svg style="left:164px;top:308px" width="18" height="19" viewBox="0 0 18 19"><circle cx="12" cy="6.4" r="4.2" fill="#1c68cc"/><path d="M8.6,6.6 a4.4,4.4 0 0 0 -4.4,4.4h4.4z" fill="#2a8a4e"/><rect x="2.8" y="11" width="5" height="4" fill="#ee8a2a"/>
<path d="M9,7.8 q1,-0.8 1.6,0.4 l0.2,2.4 l3.4,0.8 q1.2,0.4 1,1.8 l-0.6,4.6 h-4.6 l-2,-3.4 q-0.4,-1 0.8,-1 l0.6,0.4 z" fill="#fff" stroke="#666" stroke-width="0.5"/></svg>
<div class="r" style="left:571px;top:66px;width:1px;height:327px;background:#eeeeee;"></div>
<div class="r" style="left:571px;top:143px;width:93px;height:1px;background:#ececec;"></div>
<svg style="left:654.9px;top:67.6px" width="3" height="10" viewBox="0 0 3 10"><circle cx="1.5" cy="1.4" r="0.85" fill="#7a7a7a"/><circle cx="1.5" cy="5" r="0.85" fill="#7a7a7a"/><circle cx="1.5" cy="8.6" r="0.85" fill="#7a7a7a"/></svg>
<svg style="left:654.9px;top:145.6px" width="3" height="10" viewBox="0 0 3 10"><circle cx="1.5" cy="1.4" r="0.85" fill="#7a7a7a"/><circle cx="1.5" cy="5" r="0.85" fill="#7a7a7a"/><circle cx="1.5" cy="8.6" r="0.85" fill="#7a7a7a"/></svg>
<div class="r" style="left:577px;top:85.0px;width:5.2px;height:5.2px;background:#2f7ec2;"></div>
<div class="r" style="left:577px;top:93.27px;width:5.2px;height:5.2px;background:#cf3f52;"></div>
<div class="r" style="left:577px;top:101.53999999999999px;width:5.2px;height:5.2px;background:#f0b23a;"></div>
<div class="r" style="left:577px;top:109.81px;width:5.2px;height:5.2px;background:#5e9a4e;"></div>
<div class="r" style="left:577px;top:118.08px;width:5.2px;height:5.2px;background:#8f62c4;"></div>
<div class="r" style="left:577px;top:126.35px;width:5.2px;height:5.2px;background:#ee8c4c;"></div>
<div class="r" style="left:577px;top:134.62px;width:5.2px;height:5.2px;background:#eeb0c8;"></div>
<svg style="left:654px;top:82px" width="7" height="5" viewBox="0 0 7 5"><path d="M2,3.4 L3.5,1.8 L5,3.4z" fill="#9a9a9a"/></svg>
<div class="r" style="left:655px;top:88.6px;width:4.6px;height:9px;background:#c9c9c9;"></div>
<svg style="left:654px;top:134.5px" width="7" height="5" viewBox="0 0 7 5"><path d="M2,1.6 L3.5,3.2 L5,1.6z" fill="#9a9a9a"/></svg>
<svg style="left:575px;top:160px" width="50" height="40" viewBox="0 0 50 40"><rect x="3.4" y="4.8" width="31.4" height="31.4" fill="none" stroke="#a8a8a8" stroke-width="0.6" stroke-dasharray="0.8 1"/>
<rect x="20.6" y="21.6" width="11.4" height="11.4" fill="none" stroke="#a8a8a8" stroke-width="0.6" stroke-dasharray="0.8 1"/>
<path d="M34.8,4.8h9.4M32,33h12.2" stroke="#a8a8a8" stroke-width="0.6" stroke-dasharray="0.8 1"/></svg>
<div class="r" style="left:671.6px;top:71.5px;width:62.2px;height:13.8px;background:#3f3f3f;border:1px solid #2f2f2f;border-top-color:#2f2f2f;"></div>
<svg style="left:674px;top:73.4px" width="10" height="10" viewBox="0 0 10 10"><path d="M1.6,3.6h6.8v4.8h-6.8zM3.4,3.6v-1.4h3.2v1.4" fill="none" stroke="#7096c6" stroke-width="0.8"/></svg>
<svg style="left:723.9px;top:73.4px" width="3" height="10" viewBox="0 0 3 10"><circle cx="1.5" cy="1.4" r="0.85" fill="#f0f0f0"/><circle cx="1.5" cy="5" r="0.85" fill="#f0f0f0"/><circle cx="1.5" cy="8.6" r="0.85" fill="#f0f0f0"/></svg>
<div class="r" style="left:671.6px;top:88px;width:62.2px;height:43.6px;background:#4f4f4f;border:1px solid #3a3a3a;border-top-color:#2f2f2f;"></div>
<svg style="left:674px;top:89.6px" width="10" height="10" viewBox="0 0 10 10"><rect x="1.6" y="5.4" width="1.2" height="2.8" fill="#b8723e"/><rect x="3.6" y="3.6" width="1.2" height="4.6" fill="#b8723e"/><rect x="5.6" y="2" width="1.2" height="6.2" fill="#b8723e"/></svg>
<svg style="left:723.9px;top:89.6px" width="3" height="10" viewBox="0 0 3 10"><circle cx="1.5" cy="1.4" r="0.85" fill="#f0f0f0"/><circle cx="1.5" cy="5" r="0.85" fill="#f0f0f0"/><circle cx="1.5" cy="8.6" r="0.85" fill="#f0f0f0"/></svg>
<div class="r" style="left:675px;top:102.6px;width:53px;height:11.6px;background:#e4802f;border-radius:2px;"></div>
<svg style="left:677px;top:103.6px" width="8" height="10" viewBox="0 0 8 10"><rect x="0.8" y="5.6" width="1.4" height="2.6" fill="#fff"/><rect x="2.8" y="3.8" width="1.4" height="4.4" fill="#fff"/><rect x="4.8" y="2" width="1.4" height="6.2" fill="#fff"/></svg>
<svg style="left:719px;top:104.6px" width="8" height="8" viewBox="0 0 8 8"><path d="M1.6,1.6 L5.8,5.8 M5.8,1.6 L1.6,5.8" stroke="#fff" stroke-width="0.8"/></svg>
<div class="r" style="left:671.6px;top:135.6px;width:62.2px;height:13.6px;background:#3f3f3f;border:1px solid #2f2f2f;border-top-color:#2f2f2f;"></div>
<svg style="left:674px;top:137.4px" width="10" height="10" viewBox="0 0 10 10"><path d="M2.4,1.6v6.8M4.4,3h3M4.4,5h3M4.4,7h3" stroke="#7fb8a8" stroke-width="0.8"/></svg>
<svg style="left:723.9px;top:137.4px" width="3" height="10" viewBox="0 0 3 10"><circle cx="1.5" cy="1.4" r="0.85" fill="#f0f0f0"/><circle cx="1.5" cy="5" r="0.85" fill="#f0f0f0"/><circle cx="1.5" cy="8.6" r="0.85" fill="#f0f0f0"/></svg>
<div class="r" style="left:671.6px;top:152px;width:62.2px;height:13px;background:#3f3f3f;border:1px solid #2f2f2f;border-top-color:#2f2f2f;"></div>
<svg style="left:674px;top:153.4px" width="10" height="10" viewBox="0 0 10 10"><path d="M3.6,2.4v5.2M5.6,2.4v5.2M2,5h1.2M6.2,5h1.4" stroke="#9aa8c8" stroke-width="0.8"/></svg>
<svg style="left:723.9px;top:153.4px" width="3" height="10" viewBox="0 0 3 10"><circle cx="1.5" cy="1.4" r="0.85" fill="#f0f0f0"/><circle cx="1.5" cy="5" r="0.85" fill="#f0f0f0"/><circle cx="1.5" cy="8.6" r="0.85" fill="#f0f0f0"/></svg>
<div class="r" style="left:671.6px;top:167.8px;width:62.2px;height:12.6px;background:#3f3f3f;border:1px solid #2f2f2f;border-top-color:#2f2f2f;"></div>
<svg style="left:674px;top:169.2px" width="10" height="10" viewBox="0 0 10 10"><path d="M1.6,2h6.6l-2.6,3v3.2h-1.4v-3.2z" fill="none" stroke="#d8d8d8" stroke-width="0.8"/></svg>
<div class="r" style="left:671.6px;top:184px;width:62.2px;height:45.2px;background:#4f4f4f;border:1px solid #3a3a3a;border-top-color:#2f2f2f;"></div>
<svg style="left:674px;top:185.4px" width="10" height="10" viewBox="0 0 10 10"><path d="M2.6,7.8 l1,-3.4 l-2,-1.8 h2.6 l0.9,-2 l0.9,2 h2.6 l-2,1.8 l1,3.4 l-2.5,-1.9z" fill="none" stroke="#b8723e" stroke-width="0.7" stroke-dasharray="1.4 0.7"/></svg>
<div class="r" style="left:675px;top:198.2px;width:53px;height:11.6px;background:#1f6dba;border-radius:2px;"></div>
<svg style="left:677px;top:199.2px" width="8" height="10" viewBox="0 0 8 10"><path d="M2.2,1.6v7M4.6,1.6v7" stroke="#fff" stroke-width="1.1" stroke-dasharray="1.2 0.6"/></svg>
<svg style="left:719px;top:200.2px" width="8" height="8" viewBox="0 0 8 8"><path d="M1.6,1.6 L5.8,5.8 M5.8,1.6 L1.6,5.8" stroke="#fff" stroke-width="0.8"/></svg>
<div class="r" style="left:671.6px;top:231.4px;width:62.2px;height:45.8px;background:#4f4f4f;border:1px solid #3a3a3a;border-top-color:#2f2f2f;"></div>
<svg style="left:674px;top:233.2px" width="10" height="10" viewBox="0 0 10 10"><path d="M2,2h4.6v6.2h-4.6zM6.6,5.8h1.8v-2.4" fill="none" stroke="#b8723e" stroke-width="0.8"/></svg>
<div class="r" style="left:675px;top:246px;width:53px;height:11.6px;background:#e4802f;border-radius:2px;"></div>
<svg style="left:677px;top:247px" width="8" height="10" viewBox="0 0 8 10"><rect x="0.8" y="5.6" width="1.4" height="2.6" fill="#fff"/><rect x="2.8" y="3.8" width="1.4" height="4.4" fill="#fff"/><rect x="4.8" y="2" width="1.4" height="6.2" fill="#fff"/></svg>
<svg style="left:719px;top:248px" width="8" height="8" viewBox="0 0 8 8"><path d="M1.6,1.6 L5.8,5.8 M5.8,1.6 L1.6,5.8" stroke="#fff" stroke-width="0.8"/></svg>
<div class="r" style="left:671.6px;top:279px;width:62.2px;height:13.6px;background:#3f3f3f;border:1px solid #2f2f2f;border-top-color:#2f2f2f;"></div>
<svg style="left:674px;top:280.8px" width="10" height="10" viewBox="0 0 10 10"><path d="M2,5.4 L4.8,2.2 h3.6 v4 L5.6,9z" fill="none" stroke="#bc7c68" stroke-width="0.8"/></svg>
<div class="r" style="left:671.6px;top:294.6px;width:62.2px;height:13.6px;background:#3f3f3f;border:1px solid #2f2f2f;border-top-color:#2f2f2f;"></div>
<svg style="left:674px;top:296.6px" width="10" height="10" viewBox="0 0 10 10"><path d="M1.8,2h6.6v4.4h-2.6l-1,1.6v-1.6h-3z" fill="none" stroke="#bc7c68" stroke-width="0.8"/></svg>
<div class="r" style="left:671.6px;top:310.6px;width:62.2px;height:13.6px;background:#3f3f3f;border:1px solid #2f2f2f;border-top-color:#2f2f2f;"></div>
<svg style="left:674px;top:312.6px" width="10" height="10" viewBox="0 0 10 10"><circle cx="5" cy="5" r="3.4" fill="none" stroke="#8f8fd0" stroke-width="0.8"/><path d="M4.2,3.4 L6.6,5 L4.2,6.6z" fill="#8f8fd0"/></svg>
<div class="r" style="left:671.6px;top:179.6px;width:1.2px;height:1.2px;background:#9a9a9a;"></div>
<div class="r" style="left:671.6px;top:196px;width:1.2px;height:1.2px;background:#9a9a9a;"></div>
<div class="r" style="left:671.6px;top:243px;width:1.2px;height:1.2px;background:#9a9a9a;"></div>
<div class="r" style="left:28px;top:394px;width:55.6px;height:17px;background:#2b2b2b;"></div>
<svg style="left:0;top:0" width="740" height="417" viewBox="0 0 740 417"><path d="M28.3,394.6 V410.9 H83.4 V394.6" fill="none" stroke="#41901f" stroke-width="1.7"/></svg>
<svg style="left:9px;top:400px" width="12" height="10" viewBox="0 0 12 10"><path d="M1.8,2h8M1.8,4.6h8M1.8,7.2h8" stroke="#e8e8e8" stroke-width="1.1"/></svg>
<svg style="left:72.5px;top:400.5px" width="8" height="7" viewBox="0 0 8 7"><path d="M1,1.4h6L4,5.4z" fill="#f2f2f2"/></svg>
<svg style="left:88px;top:398.5px" width="12" height="11" viewBox="0 0 12 11"><path d="M5.8,1.9v6.6M2.5,5.2h6.6" stroke="#f2f2f2" stroke-width="1"/></svg>
<svg style="left:674px;top:398px" width="64" height="13" viewBox="0 0 64 13"><path d="M3.4,2.4 L8.6,7.6 M8.6,7.6 l1.6,3 M4.4,5.6 l2.6,-3 l2.6,2.4 l-2.8,2.8z" stroke="#e0e0e0" stroke-width="1.2" fill="#e0e0e0"/>
<path d="M14.6,5 h3.4 l-1.7,2.4z" fill="#e0e0e0"/>
<circle cx="26" cy="6.6" r="3.9" fill="none" stroke="#e0e0e0" stroke-width="0.9"/><circle cx="26" cy="6.6" r="1.9" fill="none" stroke="#e0e0e0" stroke-width="0.9"/><path d="M26,2.7 v-1.2 M26,6.6h1.8" stroke="#e0e0e0" stroke-width="0.8"/>
<circle cx="40.4" cy="6.2" r="3.5" fill="none" stroke="#e8e8e8" stroke-width="1.1"/><path d="M43,8.8l2,2" stroke="#e8e8e8" stroke-width="1.2"/>
<circle cx="55.2" cy="7" r="3.5" fill="none" stroke="#e8e8e8" stroke-width="1"/><path d="M55.2,7v-2.2M54,2h2.4M58,3.6l0.8,-0.8" stroke="#e8e8e8" stroke-width="0.9"/></svg>
<div id="txt">
<span class="t" style="left:368.6px;top:218.40px;font-size:30px;line-height:36.00px;font-weight:700;color:#445265;transform:translateX(-50%) scaleX(0.989);transform-origin:50% 50%;">45</span>
<span class="t" style="left:114.5px;top:23.02px;font-size:6.3px;line-height:7.56px;font-weight:400;color:#d8d8d8;transform:translateX(-50%) scaleX(0.905);transform-origin:50% 50%;-webkit-text-stroke:0.14px currentColor;">Ask</span>
<span class="t" style="left:143.5px;top:23.02px;font-size:6.3px;line-height:7.56px;font-weight:400;color:#d8d8d8;transform:translateX(-50%) scaleX(0.992);transform-origin:50% 50%;-webkit-text-stroke:0.14px currentColor;">New</span>
<span class="t" style="left:132.0px;top:30.22px;font-size:6.3px;line-height:7.56px;font-weight:400;color:#d8d8d8;transform:scaleX(0.962);transform-origin:0 50%;-webkit-text-stroke:0.14px currentColor;">Report</span>
<span class="t" style="left:179.0px;top:23.02px;font-size:6.3px;line-height:7.56px;font-weight:400;color:#d8d8d8;transform:translateX(-50%) scaleX(0.975);transform-origin:50% 50%;-webkit-text-stroke:0.14px currentColor;">Refresh</span>
<span class="t" style="left:179.0px;top:30.22px;font-size:6.3px;line-height:7.56px;font-weight:400;color:#d8d8d8;transform:translateX(-50%) scaleX(0.933);transform-origin:50% 50%;-webkit-text-stroke:0.14px currentColor;">Metadata</span>
<span class="t" style="left:147.5px;top:39.88px;font-size:6.2px;line-height:7.44px;font-weight:400;color:#8e8e8e;transform:translateX(-50%) scaleX(0.793);transform-origin:50% 50%;">GENERAL</span>
<span class="t" style="left:221.5px;top:23.02px;font-size:6.3px;line-height:7.56px;font-weight:400;color:#d8d8d8;transform:translateX(-50%) scaleX(0.882);transform-origin:50% 50%;-webkit-text-stroke:0.14px currentColor;">Conversations</span>
<span class="t" style="left:256.3px;top:23.02px;font-size:6.3px;line-height:7.56px;font-weight:400;color:#d8d8d8;transform:translateX(-50%) scaleX(0.933);transform-origin:50% 50%;-webkit-text-stroke:0.14px currentColor;">Query</span>
<span class="t" style="left:247.1px;top:30.22px;font-size:6.3px;line-height:7.56px;font-weight:400;color:#d8d8d8;transform:scaleX(0.832);transform-origin:0 50%;-webkit-text-stroke:0.14px currentColor;">Reset</span>
<span class="t" style="left:284.8px;top:7.88px;font-size:6.2px;line-height:7.44px;font-weight:400;color:#f0f0f0;transform:scaleX(0.928);transform-origin:0 50%;-webkit-text-stroke:0.14px currentColor;">Auto Run</span>
<span class="t" style="left:284.8px;top:24.52px;font-size:6.3px;line-height:7.56px;font-weight:400;color:#d8d8d8;transform:scaleX(1.035);transform-origin:0 50%;-webkit-text-stroke:0.14px currentColor;">Pivot</span>
<span class="t" style="left:326.3px;top:-1.80px;font-size:21px;line-height:25.20px;font-weight:400;color:#686868;transform:translateX(-50%) scaleX(1.001);transform-origin:50% 50%;">Σ</span>
<span class="t" style="left:315.8px;top:23.02px;font-size:6.3px;line-height:7.56px;font-weight:400;color:#6a6a6a;transform:scaleX(0.893);transform-origin:0 50%;-webkit-text-stroke:0.14px currentColor;">Totals</span>
<span class="t" style="left:350.3px;top:3.96px;font-size:6.4px;line-height:7.68px;font-weight:700;color:#5c9fd6;transform:translateX(-50%) scaleX(1.000);transform-origin:50% 50%;">A</span>
<span class="t" style="left:350.3px;top:11.46px;font-size:6.4px;line-height:7.68px;font-weight:700;color:#a88ad0;transform:translateX(-50%) scaleX(1.000);transform-origin:50% 50%;">Z</span>
<span class="t" style="left:354.3px;top:23.02px;font-size:6.3px;line-height:7.56px;font-weight:400;color:#d8d8d8;transform:translateX(-50%) scaleX(0.942);transform-origin:50% 50%;-webkit-text-stroke:0.14px currentColor;">Sort &amp;</span>
<span class="t" style="left:345.3px;top:30.22px;font-size:6.3px;line-height:7.56px;font-weight:400;color:#d8d8d8;transform:scaleX(0.943);transform-origin:0 50%;-webkit-text-stroke:0.14px currentColor;">Filter</span>
<span class="t" style="left:385.7px;top:23.02px;font-size:6.3px;line-height:7.56px;font-weight:400;color:#d8d8d8;transform:translateX(-50%) scaleX(0.914);transform-origin:50% 50%;-webkit-text-stroke:0.14px currentColor;">Members</span>
<span class="t" style="left:385.7px;top:30.22px;font-size:6.3px;line-height:7.56px;font-weight:400;color:#d8d8d8;transform:translateX(-50%) scaleX(0.902);transform-origin:50% 50%;-webkit-text-stroke:0.14px currentColor;">Search</span>
<span class="t" style="left:300.6px;top:39.88px;font-size:6.2px;line-height:7.44px;font-weight:400;color:#8e8e8e;transform:translateX(-50%) scaleX(0.752);transform-origin:50% 50%;">QUERY</span>
<span class="t" style="left:412.8px;top:7.40px;font-size:8px;line-height:9.60px;font-weight:400;color:#e8e8e8;transform:translateX(-50%) scaleX(1.000);transform-origin:50% 50%;">A</span>
<span class="t" style="left:417.4px;top:6.00px;font-size:6px;line-height:7.20px;font-weight:400;color:#e8e8e8;transform:translateX(-50%) scaleX(1.000);transform-origin:50% 50%;">ˆ</span>
<span class="t" style="left:426.6px;top:7.76px;font-size:7.4px;line-height:8.88px;font-weight:400;color:#e8e8e8;transform:translateX(-50%) scaleX(1.000);transform-origin:50% 50%;">A</span>
<span class="t" style="left:430.8px;top:5.40px;font-size:6px;line-height:7.20px;font-weight:400;color:#e8e8e8;transform:translateX(-50%) scaleX(1.000);transform-origin:50% 50%;">ˇ</span>
<span class="t" style="left:433.7px;top:23.16px;font-size:7.4px;line-height:8.88px;font-weight:400;color:#e0e0e0;transform:translateX(-50%) scaleX(1.000);transform-origin:50% 50%;">A</span>
<span class="t" style="left:462.4px;top:23.02px;font-size:6.3px;line-height:7.56px;font-weight:400;color:#d8d8d8;transform:translateX(-50%) scaleX(0.852);transform-origin:50% 50%;-webkit-text-stroke:0.14px currentColor;">Change</span>
<span class="t" style="left:453.0px;top:30.22px;font-size:6.3px;line-height:7.56px;font-weight:400;color:#d8d8d8;transform:scaleX(0.821);transform-origin:0 50%;-webkit-text-stroke:0.14px currentColor;">Visual</span>
<span class="t" style="left:499.3px;top:23.02px;font-size:6.3px;line-height:7.56px;font-weight:400;color:#d8d8d8;transform:translateX(-50%) scaleX(0.860);transform-origin:50% 50%;-webkit-text-stroke:0.14px currentColor;">Show Data</span>
<span class="t" style="left:491.8px;top:30.22px;font-size:6.3px;line-height:7.56px;font-weight:400;color:#d8d8d8;transform:scaleX(0.857);transform-origin:0 50%;-webkit-text-stroke:0.14px currentColor;">Grid</span>
<span class="t" style="left:461.5px;top:39.88px;font-size:6.2px;line-height:7.44px;font-weight:400;color:#8e8e8e;transform:translateX(-50%) scaleX(0.864);transform-origin:50% 50%;">FORMATTING</span>
<span class="t" style="left:540.7px;top:23.02px;font-size:6.3px;line-height:7.56px;font-weight:400;color:#d8d8d8;transform:translateX(-50%) scaleX(0.839);transform-origin:50% 50%;-webkit-text-stroke:0.14px currentColor;">Reset</span>
<span class="t" style="left:540.7px;top:30.22px;font-size:6.3px;line-height:7.56px;font-weight:400;color:#d8d8d8;transform:translateX(-50%) scaleX(0.866);transform-origin:50% 50%;-webkit-text-stroke:0.14px currentColor;">Workspace</span>
<span class="t" style="left:540.2px;top:39.88px;font-size:6.2px;line-height:7.44px;font-weight:400;color:#8e8e8e;transform:translateX(-50%) scaleX(0.796);transform-origin:50% 50%;">WORKSPACE</span>
<span class="t" style="left:6.0px;top:54.00px;font-size:6.5px;line-height:7.80px;font-weight:400;color:#f0f0f0;transform:scaleX(0.928);transform-origin:0 50%;-webkit-text-stroke:0.14px currentColor;">Dimensions</span>
<span class="t" style="left:161.2px;top:54.00px;font-size:6.5px;line-height:7.80px;font-weight:400;color:#f0f0f0;transform:scaleX(0.947);transform-origin:0 50%;-webkit-text-stroke:0.14px currentColor;">In-Memory DB \ SampleDemo \ SampleDemo</span>
<span class="t" style="left:411.0px;top:54.00px;font-size:6.5px;line-height:7.80px;font-weight:400;color:#f0f0f0;transform:scaleX(0.957);transform-origin:0 50%;-webkit-text-stroke:0.14px currentColor;">New Discovery</span>
<span class="t" style="left:642.6px;top:53.70px;font-size:7px;line-height:8.40px;font-weight:700;color:#e0e0e0;transform:translateX(-50%) scaleX(1.000);transform-origin:50% 50%;">?</span>
<span class="t" style="left:669.8px;top:54.00px;font-size:6.5px;line-height:7.80px;font-weight:400;color:#f0f0f0;transform:scaleX(0.898);transform-origin:0 50%;-webkit-text-stroke:0.14px currentColor;">Drop Zones</span>
<span class="t" style="left:31.4px;top:87.84px;font-size:6.6px;line-height:7.92px;font-weight:400;color:#e8e8e8;transform:scaleX(0.926);transform-origin:0 50%;-webkit-text-stroke:0.14px currentColor;">Color</span>
<span class="t" style="left:31.4px;top:100.24px;font-size:6.6px;line-height:7.92px;font-weight:400;color:#e8e8e8;transform:scaleX(0.947);transform-origin:0 50%;-webkit-text-stroke:0.14px currentColor;">ModelName</span>
<span class="t" style="left:31.4px;top:112.74px;font-size:6.6px;line-height:7.92px;font-weight:400;color:#e8e8e8;transform:scaleX(0.936);transform-origin:0 50%;-webkit-text-stroke:0.14px currentColor;">Product</span>
<span class="t" style="left:31.4px;top:125.14px;font-size:6.6px;line-height:7.92px;font-weight:400;color:#e8e8e8;transform:scaleX(0.923);transform-origin:0 50%;-webkit-text-stroke:0.14px currentColor;">Product Category</span>
<span class="t" style="left:31.4px;top:137.54px;font-size:6.6px;line-height:7.92px;font-weight:400;color:#7aaee4;transform:scaleX(0.919);transform-origin:0 50%;-webkit-text-stroke:0.14px currentColor;">Product Sub Category</span>
<span class="t" style="left:31.4px;top:149.84px;font-size:6.6px;line-height:7.92px;font-weight:400;color:#e8e8e8;transform:scaleX(0.872);transform-origin:0 50%;-webkit-text-stroke:0.14px currentColor;">Size</span>
<span class="t" style="left:31.4px;top:162.24px;font-size:6.6px;line-height:7.92px;font-weight:400;color:#e8e8e8;transform:scaleX(0.904);transform-origin:0 50%;-webkit-text-stroke:0.14px currentColor;">StandardCost</span>
<span class="t" style="left:31.4px;top:174.64px;font-size:6.6px;line-height:7.92px;font-weight:400;color:#e8e8e8;transform:scaleX(0.879);transform-origin:0 50%;-webkit-text-stroke:0.14px currentColor;">Style</span>
<span class="t" style="left:31.4px;top:186.94px;font-size:6.6px;line-height:7.92px;font-weight:400;color:#e8e8e8;transform:scaleX(0.950);transform-origin:0 50%;-webkit-text-stroke:0.14px currentColor;">Weight</span>
<span class="t" style="left:31.4px;top:199.20px;font-size:6.5px;line-height:7.80px;font-weight:400;color:#e8e8e8;transform:scaleX(0.948);transform-origin:0 50%;-webkit-text-stroke:0.14px currentColor;">products Hierarchy</span>
<span class="t" style="left:25.0px;top:211.50px;font-size:6.5px;line-height:7.80px;font-weight:400;color:#e8e8e8;transform:scaleX(0.983);transform-origin:0 50%;-webkit-text-stroke:0.14px currentColor;">promotions</span>
<span class="t" style="left:6.0px;top:228.10px;font-size:6.5px;line-height:7.80px;font-weight:400;color:#f0f0f0;transform:scaleX(0.929);transform-origin:0 50%;-webkit-text-stroke:0.14px currentColor;">Measures</span>
<span class="t" style="left:78.2px;top:228.10px;font-size:6.5px;line-height:7.80px;font-weight:400;color:#f0f0f0;transform:scaleX(0.941);transform-origin:0 50%;-webkit-text-stroke:0.14px currentColor;">Elements</span>
<span class="t" style="left:19.9px;top:242.10px;font-size:8px;line-height:9.60px;font-weight:700;color:#f08a32;transform:translateX(-50%) scaleX(1.096);transform-origin:50% 50%;font-style:italic;">fx</span>
<span class="t" style="left:40.5px;top:260.64px;font-size:6.6px;line-height:7.92px;font-weight:400;color:#e8e8e8;transform:scaleX(0.906);transform-origin:0 50%;-webkit-text-stroke:0.14px currentColor;">Cost</span>
<span class="t" style="left:40.5px;top:273.04px;font-size:6.6px;line-height:7.92px;font-weight:400;color:#e8e8e8;transform:scaleX(0.856);transform-origin:0 50%;-webkit-text-stroke:0.14px currentColor;">Expenses</span>
<span class="t" style="left:40.5px;top:285.44px;font-size:6.6px;line-height:7.92px;font-weight:400;color:#e8e8e8;transform:scaleX(0.967);transform-origin:0 50%;-webkit-text-stroke:0.14px currentColor;">Margin</span>
<span class="t" style="left:40.5px;top:297.84px;font-size:6.6px;line-height:7.92px;font-weight:400;color:#e8e8e8;transform:scaleX(0.946);transform-origin:0 50%;-webkit-text-stroke:0.14px currentColor;">net margin</span>
<span class="t" style="left:40.5px;top:310.24px;font-size:6.6px;line-height:7.92px;font-weight:400;color:#e8e8e8;transform:scaleX(0.989);transform-origin:0 50%;-webkit-text-stroke:0.14px currentColor;">net profit</span>
<span class="t" style="left:40.5px;top:322.64px;font-size:6.6px;line-height:7.92px;font-weight:400;color:#e8e8e8;transform:scaleX(0.904);transform-origin:0 50%;-webkit-text-stroke:0.14px currentColor;">OverHead</span>
<span class="t" style="left:40.5px;top:335.04px;font-size:6.6px;line-height:7.92px;font-weight:400;color:#e8e8e8;transform:scaleX(0.864);transform-origin:0 50%;-webkit-text-stroke:0.14px currentColor;">Price</span>
<span class="t" style="left:40.5px;top:347.44px;font-size:6.6px;line-height:7.92px;font-weight:400;color:#e8e8e8;transform:scaleX(0.940);transform-origin:0 50%;-webkit-text-stroke:0.14px currentColor;">Quantity</span>
<span class="t" style="left:40.5px;top:359.84px;font-size:6.6px;line-height:7.92px;font-weight:400;color:#e8e8e8;transform:scaleX(0.905);transform-origin:0 50%;-webkit-text-stroke:0.14px currentColor;">returns</span>
<span class="t" style="left:40.5px;top:372.24px;font-size:6.6px;line-height:7.92px;font-weight:400;color:#e8e8e8;transform:scaleX(0.806);transform-origin:0 50%;-webkit-text-stroke:0.14px currentColor;">Sales</span>
<span class="t" style="left:40.5px;top:384.64px;font-size:6.6px;line-height:7.92px;font-weight:400;color:#e8e8e8;transform:scaleX(0.926);transform-origin:0 50%;-webkit-text-stroke:0.14px currentColor;">transactionID</span>
<span class="t" style="left:173.3px;top:70.32px;font-size:6.3px;line-height:7.56px;font-weight:400;color:#8a8a8a;transform:scaleX(0.880);transform-origin:0 50%;">Cost</span>
<span class="t" style="left:576.0px;top:68.88px;font-size:6.7px;line-height:8.04px;font-weight:400;color:#5a5a5a;transform:scaleX(0.925);transform-origin:0 50%;-webkit-text-stroke:0.14px currentColor;">Product Sub Category</span>
<span class="t" style="left:584.0px;top:83.96px;font-size:6.4px;line-height:7.68px;font-weight:400;color:#7c7c7c;transform:scaleX(0.954);transform-origin:0 50%;">Bib-Shorts</span>
<span class="t" style="left:584.0px;top:92.23px;font-size:6.4px;line-height:7.68px;font-weight:400;color:#7c7c7c;transform:scaleX(0.890);transform-origin:0 50%;">Bike Racks</span>
<span class="t" style="left:584.0px;top:100.50px;font-size:6.4px;line-height:7.68px;font-weight:400;color:#7c7c7c;transform:scaleX(0.908);transform-origin:0 50%;">Bike Stands</span>
<span class="t" style="left:584.0px;top:108.77px;font-size:6.4px;line-height:7.68px;font-weight:400;color:#7c7c7c;transform:scaleX(0.927);transform-origin:0 50%;">Bottles and Cages</span>
<span class="t" style="left:584.0px;top:117.04px;font-size:6.4px;line-height:7.68px;font-weight:400;color:#7c7c7c;transform:scaleX(0.948);transform-origin:0 50%;">Bottom Brackets</span>
<span class="t" style="left:584.0px;top:125.31px;font-size:6.4px;line-height:7.68px;font-weight:400;color:#7c7c7c;transform:scaleX(0.879);transform-origin:0 50%;">Brakes</span>
<span class="t" style="left:584.0px;top:133.58px;font-size:6.4px;line-height:7.68px;font-weight:400;color:#7c7c7c;transform:scaleX(0.837);transform-origin:0 50%;">Caps</span>
<span class="t" style="left:575.4px;top:146.98px;font-size:6.7px;line-height:8.04px;font-weight:400;color:#5a5a5a;transform:scaleX(0.942);transform-origin:0 50%;-webkit-text-stroke:0.14px currentColor;">Quantity</span>
<span class="t" style="left:612.2px;top:165.42px;font-size:6.3px;line-height:7.56px;font-weight:400;color:#6a6a6a;transform:scaleX(0.986);transform-origin:0 50%;">2K</span>
<span class="t" style="left:612.8px;top:184.82px;font-size:6.3px;line-height:7.56px;font-weight:400;color:#6a6a6a;transform:scaleX(0.913);transform-origin:0 50%;">15</span>
<span class="t" style="left:687.6px;top:74.70px;font-size:6.5px;line-height:7.80px;font-weight:400;color:#f0f0f0;transform:scaleX(0.954);transform-origin:0 50%;-webkit-text-stroke:0.14px currentColor;">Categories</span>
<span class="t" style="left:687.6px;top:90.90px;font-size:6.5px;line-height:7.80px;font-weight:400;color:#f0f0f0;transform:scaleX(0.942);transform-origin:0 50%;-webkit-text-stroke:0.14px currentColor;">Score</span>
<span class="t" style="left:687.6px;top:104.70px;font-size:6.5px;line-height:7.80px;font-weight:400;color:#fff;transform:scaleX(0.898);transform-origin:0 50%;-webkit-text-stroke:0.14px currentColor;">Cost</span>
<span class="t" style="left:687.6px;top:138.70px;font-size:6.5px;line-height:7.80px;font-weight:400;color:#f0f0f0;transform:scaleX(0.871);transform-origin:0 50%;-webkit-text-stroke:0.14px currentColor;">Trellis Verti...</span>
<span class="t" style="left:687.6px;top:154.70px;font-size:6.5px;line-height:7.80px;font-weight:400;color:#f0f0f0;transform:scaleX(0.897);transform-origin:0 50%;-webkit-text-stroke:0.14px currentColor;">Trellis Hori...</span>
<span class="t" style="left:687.6px;top:170.50px;font-size:6.5px;line-height:7.80px;font-weight:400;color:#f0f0f0;transform:scaleX(0.932);transform-origin:0 50%;-webkit-text-stroke:0.14px currentColor;">Filters</span>
<span class="t" style="left:687.6px;top:186.70px;font-size:6.5px;line-height:7.80px;font-weight:400;color:#f0f0f0;transform:scaleX(0.966);transform-origin:0 50%;-webkit-text-stroke:0.14px currentColor;">Color</span>
<span class="t" style="left:687.6px;top:200.30px;font-size:6.5px;line-height:7.80px;font-weight:400;color:#fff;transform:scaleX(0.945);transform-origin:0 50%;-webkit-text-stroke:0.14px currentColor;">Product ...</span>
<span class="t" style="left:687.6px;top:234.50px;font-size:6.5px;line-height:7.80px;font-weight:400;color:#f0f0f0;transform:scaleX(0.970);transform-origin:0 50%;-webkit-text-stroke:0.14px currentColor;">Weight</span>
<span class="t" style="left:687.6px;top:248.10px;font-size:6.5px;line-height:7.80px;font-weight:400;color:#fff;transform:scaleX(0.950);transform-origin:0 50%;-webkit-text-stroke:0.14px currentColor;">Quantity</span>
<span class="t" style="left:687.6px;top:282.10px;font-size:6.5px;line-height:7.80px;font-weight:400;color:#f0f0f0;transform:scaleX(0.888);transform-origin:0 50%;-webkit-text-stroke:0.14px currentColor;">Labels</span>
<span class="t" style="left:687.6px;top:297.90px;font-size:6.5px;line-height:7.80px;font-weight:400;color:#f0f0f0;transform:scaleX(0.985);transform-origin:0 50%;-webkit-text-stroke:0.14px currentColor;">Tooltip</span>
<span class="t" style="left:687.6px;top:313.90px;font-size:6.5px;line-height:7.80px;font-weight:400;color:#f0f0f0;transform:scaleX(0.897);transform-origin:0 50%;-webkit-text-stroke:0.14px currentColor;">Motion</span>
<span class="t" style="left:33.2px;top:400.00px;font-size:7px;line-height:8.40px;font-weight:700;color:#f2f2f2;transform:scaleX(0.880);transform-origin:0 50%;">* Discovery1</span>
</div>
</div></body></html>
